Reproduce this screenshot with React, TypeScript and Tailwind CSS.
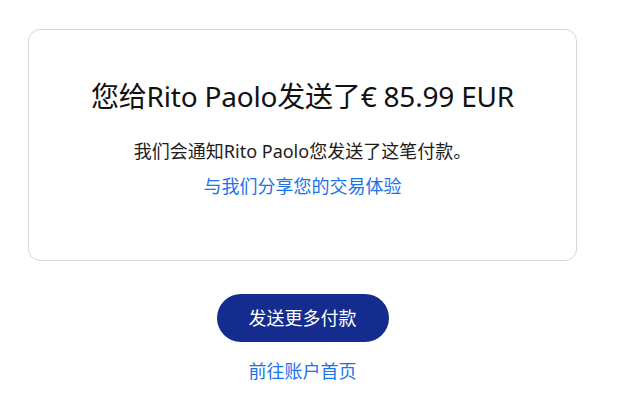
export default function App() {
  return (
    <div className="w-[629px] h-[415px] bg-white" style={{ fontFamily: '"Noto Sans", "Noto Sans CJK SC", sans-serif' }}>
      <div className="ml-[28px] w-[549px] pt-[29px] flex flex-col items-center">
        <div className="w-full h-[232px] border border-[#d9d7cf] rounded-[12px] flex flex-col items-center pt-[46px]">
          <h1 className="text-[28px] leading-[40px] tracking-[-0.2px] text-[#111111] font-normal">您给Rito Paolo发送了€ 85.99 EUR</h1>
          <p className="mt-[23px] text-[18px] leading-[24px] text-[#1c1c1c]">我们会通知Rito Paolo您发送了这笔付款。</p>
          <a className="mt-[11px] text-[18px] leading-[24px] text-[#1a73e8]">与我们分享您的交易体验</a>
        </div>
        <button className="mt-[33px] w-[172px] h-[48px] rounded-full bg-[#142c8e] text-white text-[18px]">发送更多付款</button>
        <a className="mt-[17px] text-[18px] leading-[24px] text-[#1a73e8]">前往账户首页</a>
      </div>
    </div>
  );
}
